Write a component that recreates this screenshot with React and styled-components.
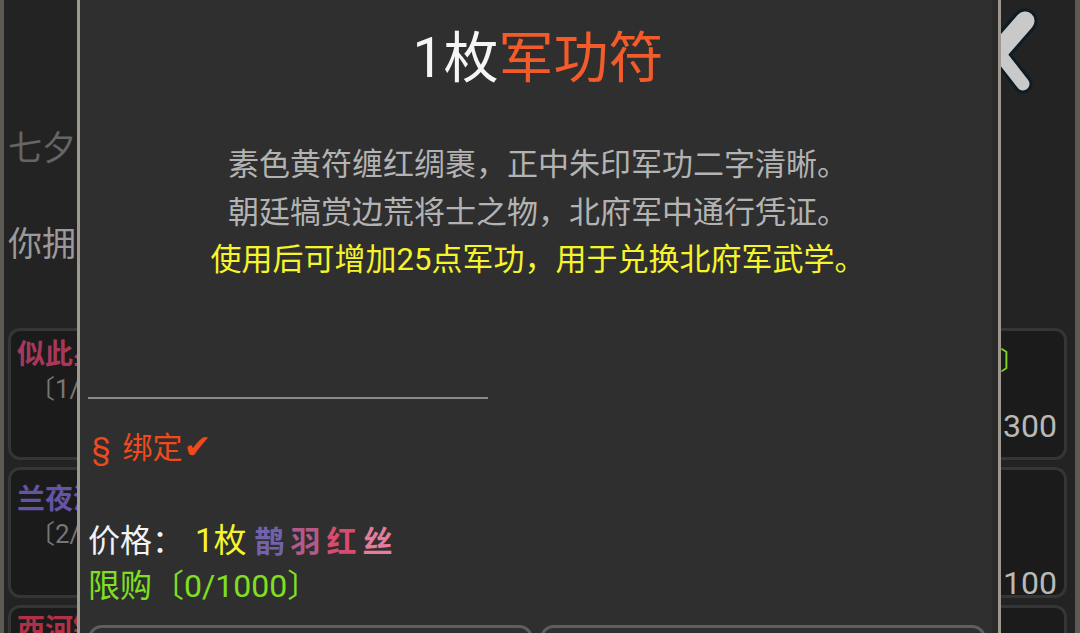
import React from 'react';
import styled, { createGlobalStyle } from 'styled-components';

const Global = createGlobalStyle`
  html, body { margin: 0; padding: 0; background: #232323; overflow: hidden; }
  body { font-family: Roboto, "Noto Sans CJK SC", sans-serif; }
  * { box-sizing: border-box; }
`;

const Screen = styled.div`
  width: 1080px;
  height: 633px;
  display: flex;
  overflow: hidden;
  background: #232323;
`;

const Frame = styled.div`
  width: ${p => p.$w}px;
  flex: none;
  background: #5d5a54;
`;

const Page = styled.div`
  position: relative;
  flex: 1;
  display: flex;
  flex-direction: column;
  padding: 0 8px 0 4px;
  background: #232323;
`;

const TopBar = styled.div`
  height: 100px;
  flex: none;
  display: flex;
  justify-content: flex-end;
  padding-right: 22px;
`;

const InfoLine = styled.div`
  margin-top: ${p => p.$mt}px;
  font-size: 34px;
  line-height: 48px;
  color: ${p => p.$color};
  white-space: nowrap;
`;

const CardGrid = styled.div`
  margin-top: 60px;
  display: grid;
  grid-template-columns: 1fr 1fr;
  column-gap: 10px;
  row-gap: 7px;
`;

const Card = styled.div`
  height: ${p => p.$h}px;
  border: 3px solid #353535;
  border-radius: 12px;
  background: #1b1b1b;
  display: flex;
  flex-direction: column;
  justify-content: ${p => (p.$between ? 'space-between' : 'flex-start')};
  gap: 4px;
  padding: ${p => p.$pt}px 7px ${p => p.$pb}px 6px;
`;

const CardName = styled.div`
  font-family: "Noto Sans CJK SC", sans-serif;
  font-weight: 700;
  font-size: 28px;
  line-height: 34px;
  color: ${p => p.$color};
  white-space: nowrap;
`;

const CardSub = styled.div`
  font-size: 26px;
  line-height: 32px;
  color: #767676;
  padding-left: 12px;
  white-space: nowrap;
`;

const CardHead = styled.div`
  display: flex;
  justify-content: flex-end;
  padding-right: 32px;
  font-size: 25px;
  line-height: 32px;
  color: #8a8a8a;
  white-space: nowrap;
`;

const Green = styled.span`
  color: #7fd621;
`;

const CardFoot = styled.div`
  text-align: right;
  font-size: 32px;
  line-height: ${p => p.$lh}px;
  color: #b9b9b9;
  white-space: nowrap;
`;

const Modal = styled.div`
  position: absolute;
  left: 73px;
  top: -40px;
  width: 924px;
  height: 760px;
  border: 3px solid #9e998f;
  background: #2f2f2f;
  box-shadow: inset -6px 0 0 #2a2a2a;
  padding: 57px 10px 0 8px;
  display: flex;
  flex-direction: column;
  & > * { flex-shrink: 0; }
`;

const Title = styled.div`
  font-size: 55px;
  line-height: 76px;
  text-align: center;
  color: #f5f5f5;
  white-space: nowrap;
`;

const Accent = styled.span`
  color: ${p => p.$color};
`;

const Desc = styled.div`
  margin-top: 45px;
  font-size: 31px;
  line-height: 47.5px;
  text-align: center;
  color: #b3b3b3;
`;

const DescLine = styled.div`
  color: ${p => p.$color || 'inherit'};
  white-space: nowrap;
`;

const Rule = styled.div`
  margin-top: 113px;
  width: 400px;
  height: 2px;
  background: #8a8a8a;
`;

const Bind = styled.div`
  margin-top: 28px;
  height: 40px;
  font-size: 30px;
  line-height: 40px;
  color: #f04a1c;
  padding-left: 4px;
  white-space: nowrap;
  display: flex;
  align-items: baseline;
`;

const Sect = styled.span`
  margin-right: 12px;
`;

const Check = styled.span`
  font-family: "DejaVu Sans", sans-serif;
  font-size: 33px;
  line-height: 40px;
  margin-left: 1px;
`;

const Row = styled.div`
  margin-top: ${p => p.$mt || 0}px;
  font-size: 32px;
  line-height: 45px;
  color: ${p => p.$color};
  white-space: nowrap;
  display: flex;
  align-items: baseline;
`;

const Price = styled.span`
  margin-left: 11px;
  font-size: 33px;
  color: #f6f42a;
`;

const Calli = styled.span`
  font-family: "Noto Sans CJK SC", sans-serif;
  font-weight: 700;
  font-size: 30px;
  letter-spacing: 6px;
  margin-left: 8px;
`;

const Buttons = styled.div`
  margin-top: 16px;
  display: grid;
  grid-template-columns: 445px 446px;
  column-gap: 7px;
`;

const Btn = styled.div`
  height: 80px;
  border: 3px solid #5e5e5e;
  border-radius: 14px;
  background: #2f2f2f;
`;

function CloseX() {
  return (
    <svg width="80" height="100" viewBox="0 0 80 100">
      <g strokeLinecap="round" fill="none">
        <line x1="33" y1="52" x2="60" y2="21" stroke="#0f1c25" strokeWidth="25" />
        <line x1="33" y1="52" x2="58" y2="84" stroke="#0f1c25" strokeWidth="19" />
        <line x1="33" y1="52" x2="6" y2="21" stroke="#0f1c25" strokeWidth="25" />
        <line x1="33" y1="52" x2="8" y2="84" stroke="#0f1c25" strokeWidth="19" />
        <line x1="33" y1="52" x2="60" y2="21" stroke="#c9c9c9" strokeWidth="19" />
        <line x1="33" y1="52" x2="58" y2="84" stroke="#c9c9c9" strokeWidth="13" />
        <line x1="33" y1="52" x2="6" y2="21" stroke="#c9c9c9" strokeWidth="19" />
        <line x1="33" y1="52" x2="8" y2="84" stroke="#c9c9c9" strokeWidth="13" />
      </g>
    </svg>
  );
}

const calli = [
  { c: '鹊', color: '#7262aa' },
  { c: '羽', color: '#b45a88' },
  { c: '红', color: '#d94c70' },
  { c: '丝', color: '#e47c9c' },
];

export default function App() {
  return (
    <>
      <Global />
      <Screen>
        <Frame $w={4} />
        <Page>
          <TopBar>
            <CloseX />
          </TopBar>
          <InfoLine $mt={24} $color="#656565">七夕 兑换限时开启</InfoLine>
          <InfoLine $mt={48} $color="#9a9a9a">你拥有：鹊羽红丝×0</InfoLine>
          <CardGrid>
            <Card $h={132} $pt={4} $pb={0}>
              <CardName $color="#a8385a">似此星辰非昨夜</CardName>
              <CardSub>〔1/3〕</CardSub>
            </Card>
            <Card $between $h={132} $pt={15} $pb={14}>
              <CardHead>军功符<Green>〔限〕</Green></CardHead>
              <CardFoot $lh={34}>：300</CardFoot>
            </Card>
            <Card $h={131} $pt={10} $pb={0}>
              <CardName $color="#6553a4">兰夜清辉</CardName>
              <CardSub>〔2/3〕</CardSub>
            </Card>
            <Card $between $h={131} $pt={15} $pb={0}>
              <CardHead>&nbsp;</CardHead>
              <CardFoot $lh={24}>：100</CardFoot>
            </Card>
            <Card $h={131} $pt={2} $pb={0}>
              <CardName $color="#b03048">西河锦书</CardName>
              <CardSub>〔3/3〕</CardSub>
            </Card>
            <Card $h={131} $pt={4} $pb={0}>
              <CardHead>&nbsp;</CardHead>
            </Card>
          </CardGrid>

          <Modal>
            <Title>1枚<Accent $color="#f35b2a">军功符</Accent></Title>
            <Desc>
              <DescLine>素色黄符缠红绸裹，正中朱印军功二字清晰。</DescLine>
              <DescLine>朝廷犒赏边荒将士之物，北府军中通行凭证。</DescLine>
              <DescLine $color="#f6f42a">使用后可增加25点军功，用于兑换北府军武学。</DescLine>
            </Desc>
            <Rule />
            <Bind><Sect>§</Sect>绑定<Check>✔</Check></Bind>
            <Row $mt={50} $color="#f2f2f2">
              价格：<Price>1枚</Price>
              <Calli>
                {calli.map(x => (
                  <Accent key={x.c} $color={x.color}>{x.c}</Accent>
                ))}
              </Calli>
            </Row>
            <Row $color="#7fe021">限购〔0/1000〕</Row>
            <Buttons>
              <Btn />
              <Btn />
            </Buttons>
          </Modal>
        </Page>
        <Frame $w={5} />
      </Screen>
    </>
  );
}
